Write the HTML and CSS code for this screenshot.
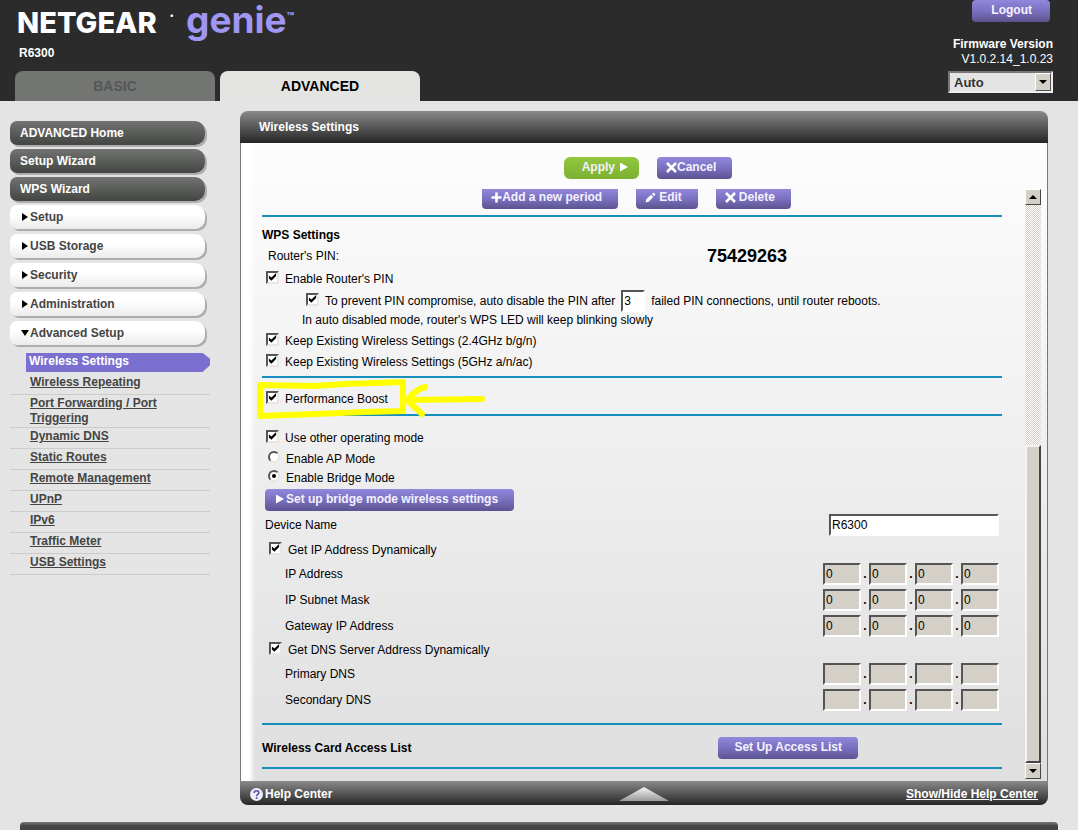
FILE: index.html
```html
<!DOCTYPE html>
<html lang="en">
<head>
<meta charset="utf-8">
<title>NETGEAR genie - R6300</title>
<link rel="stylesheet" href="styles.css">
</head>
<body>
<header class="top">
  <div class="brand">
    <div class="logo"><span class="logo-name">NETGEAR</span><span class="logo-reg">•</span><span class="logo-genie">genie</span><span class="logo-tm">™</span></div>
    <div class="model">R6300</div>
    <nav class="tabs">
      <a class="tab" href="#basic">BASIC</a>
      <a class="tab active" href="#advanced">ADVANCED</a>
    </nav>
  </div>
  <div class="account">
    <button class="btn logout" type="button">Logout</button>
    <b class="fw">Firmware Version</b>
    <span class="fw">V1.0.2.14_1.0.23</span>
    <span class="lang"><select aria-label="Language"><option>Auto</option></select><span class="lang-arrow"></span></span>
  </div>
</header>

<div class="page">
  <nav class="side">
    <button class="item dark" type="button">ADVANCED Home</button>
    <button class="item dark" type="button">Setup Wizard</button>
    <button class="item dark" type="button">WPS Wizard</button>
    <button class="item" type="button"><i class="tri"></i>Setup</button>
    <button class="item" type="button"><i class="tri"></i>USB Storage</button>
    <button class="item" type="button"><i class="tri"></i>Security</button>
    <button class="item" type="button"><i class="tri"></i>Administration</button>
    <button class="item" type="button"><i class="tri down"></i>Advanced Setup</button>
    <a class="current" href="#wireless">Wireless Settings</a>
    <ul class="sub">
      <li><a href="#repeating">Wireless Repeating</a></li>
      <li><a href="#ports">Port Forwarding / Port Triggering</a></li>
      <li><a href="#ddns">Dynamic DNS</a></li>
      <li><a href="#routes">Static Routes</a></li>
      <li><a href="#remote">Remote Management</a></li>
      <li><a href="#upnp">UPnP</a></li>
      <li><a href="#ipv6">IPv6</a></li>
      <li><a href="#traffic">Traffic Meter</a></li>
      <li><a href="#usb">USB Settings</a></li>
    </ul>
  </nav>

  <main class="panel">
    <h1 class="bar title">Wireless Settings</h1>
    <div class="inner">
      <div class="toolbar">
        <button class="btn apply" type="button">Apply <i class="play"></i></button>
        <button class="btn" type="button"><svg class="ico" viewBox="0 0 11 11"><path d="M1 1L10 10M10 1L1 10"/></svg>Cancel</button>
      </div>
      <div class="scroller">
        <form class="content">
          <div class="periods">
            <button class="btn cut" type="button"><svg class="ico" viewBox="0 0 11 11"><path d="M5.500 0.500V10.500M0.500 5.500H10.500"/></svg>Add a new period</button>
            <button class="btn cut wide" type="button"><svg class="ico" viewBox="0 0 11 11"><path class="fill" d="M0.500 10.500L1.500 7L6 2.800L8.200 5L4 9.500ZM7 2L8.500 0.500L10.500 2.500L9 4Z"/></svg>Edit</button>
            <button class="btn cut wide" type="button"><svg class="ico" viewBox="0 0 11 11"><path d="M1 1L10 10M10 1L1 10"/></svg>Delete</button>
          </div>
          <section class="wps">
            <h2>WPS Settings</h2>
            <div class="row r22 in6"><span>Router's PIN:</span><b class="pin">75429263</b></div>
            <div class="row r24 in4"><input type="checkbox" id="c1" checked><label for="c1">Enable Router's PIN</label></div>
            <div class="row r20 in44"><input type="checkbox" id="c2" checked><label for="c2">To prevent PIN compromise, auto disable the PIN after</label><input class="field count" type="text" value="3" aria-label="Failed connections"><span>failed PIN connections, until router reboots.</span></div>
            <div class="row r18 in40">In auto disabled mode, router's WPS LED will keep blinking slowly</div>
            <div class="row r24 in4"><input type="checkbox" id="c3" checked><label for="c3">Keep Existing Wireless Settings (2.4GHz b/g/n)</label></div>
            <div class="row r18 in4"><input type="checkbox" id="c4" checked><label for="c4">Keep Existing Wireless Settings (5GHz a/n/ac)</label></div>
          </section>
          <section class="boost">
            <div class="row r24 in4"><input type="checkbox" id="c5" checked><label for="c5">Performance Boost</label></div>
            <svg class="mark" viewBox="0 0 235 48"><path d="M5 10L60 11L90 9L148 7L148 36L110 37L60 39L5 41Z"/><path class="arrow" d="M170 12C163 14 156 20 152 25L227 24M152 25L167 39"/></svg>
          </section>
          <section class="mode">
            <div class="row r24 in4"><input type="checkbox" id="c6" checked><label for="c6">Use other operating mode</label></div>
            <div class="row r18 in6"><input type="radio" name="mode" id="r1"><label for="r1">Enable AP Mode</label></div>
            <div class="row r20 in6"><input type="radio" name="mode" id="r2" checked><label for="r2">Enable Bridge Mode</label></div>
            <button class="btn bridge" type="button"><i class="play"></i>Set up bridge mode wireless settings</button>
            <div class="row r28 in3 ends"><label for="dev">Device Name</label><input class="field device" type="text" id="dev" value="R6300"></div>
            <div class="row r22 in7"><input type="checkbox" id="c7" checked><label for="c7">Get IP Address Dynamically</label></div>
            <div class="row r26 in23 ends"><span>IP Address</span><div class="ip"><input class="field" disabled value="0" aria-label="IP 1"><b>.</b><input class="field" disabled value="0" aria-label="IP 2"><b>.</b><input class="field" disabled value="0" aria-label="IP 3"><b>.</b><input class="field" disabled value="0" aria-label="IP 4"></div></div>
            <div class="row r26 in23 ends"><span>IP Subnet Mask</span><div class="ip"><input class="field" disabled value="0" aria-label="Mask 1"><b>.</b><input class="field" disabled value="0" aria-label="Mask 2"><b>.</b><input class="field" disabled value="0" aria-label="Mask 3"><b>.</b><input class="field" disabled value="0" aria-label="Mask 4"></div></div>
            <div class="row r26 in23 ends"><span>Gateway IP Address</span><div class="ip"><input class="field" disabled value="0" aria-label="Gateway 1"><b>.</b><input class="field" disabled value="0" aria-label="Gateway 2"><b>.</b><input class="field" disabled value="0" aria-label="Gateway 3"><b>.</b><input class="field" disabled value="0" aria-label="Gateway 4"></div></div>
            <div class="row r22 in7"><input type="checkbox" id="c8" checked><label for="c8">Get DNS Server Address Dynamically</label></div>
            <div class="row r26 in23 ends"><span>Primary DNS</span><div class="ip"><input class="field" disabled aria-label="Primary 1"><b>.</b><input class="field" disabled aria-label="Primary 2"><b>.</b><input class="field" disabled aria-label="Primary 3"><b>.</b><input class="field" disabled aria-label="Primary 4"></div></div>
            <div class="row r26 in23 ends"><span>Secondary DNS</span><div class="ip"><input class="field" disabled aria-label="Secondary 1"><b>.</b><input class="field" disabled aria-label="Secondary 2"><b>.</b><input class="field" disabled aria-label="Secondary 3"><b>.</b><input class="field" disabled aria-label="Secondary 4"></div></div>
          </section>
          <section class="access">
            <h2>Wireless Card Access List</h2>
            <button class="btn list" type="button">Set Up Access List</button>
          </section>
        </form>
        <div class="scrollbar">
          <button class="sb" type="button" aria-label="Scroll up"><i class="up"></i></button>
          <div class="track"></div>
          <div class="thumb"></div>
          <button class="sb" type="button" aria-label="Scroll down"><i class="dn"></i></button>
        </div>
      </div>
    </div>
    <div class="bar help">
      <span class="help-name"><svg class="q" viewBox="0 0 13 13"><circle cx="6.500" cy="6.500" r="6.500" fill="#f0f0fa"/><path d="M4.200 5C4.200 2 9 2.100 8.900 4.800C8.800 6.400 6.600 6.300 6.600 8.200M6.600 9.300V10.900" fill="none" stroke="#5a55a8" stroke-width="1.700"/></svg>Help Center</span>
      <svg class="peak" viewBox="0 0 50 14"><defs><linearGradient id="pk" x1="0" y1="0" x2="0" y2="1"><stop offset="0" stop-color="#f4f4f4"/><stop offset="1" stop-color="#9a9a9a"/></linearGradient></defs><path d="M25 0L50 14H0Z" fill="url(#pk)"/></svg>
      <a href="#help">Show/Hide Help Center</a>
    </div>
  </main>
</div>
<footer class="foot"></footer>
</body>
</html>
```
FILE: styles.css
```css
* { box-sizing: border-box; }
body {
  margin: 0;
  background: #e4e4e4;
  color: #000;
  font: 12px/15px "Liberation Sans", Arial, sans-serif;
}
button, input, select { font: inherit; margin: 0; }
h1, h2 { margin: 0; font-size: 12px; line-height: 20px; }

/* header */
.top {
  display: flex;
  justify-content: space-between;
  background: #2b2b2b;
  color: #fff;
}
.brand { display: flex; flex-direction: column; }
.logo {
  display: flex;
  align-items: baseline;
  height: 46px;
  padding-left: 17px;
  font: 800 29px/40px Inter, sans-serif;
}
.logo-name { min-width: 153px; }
.logo-reg { align-self: flex-start; width: 16px; font-size: 8px; line-height: 30px; }
.logo-genie { color: #9f97f3; font-size: 37px; font-weight: 700; }
.logo-tm { align-self: flex-start; color: #9f97f3; font-size: 12px; line-height: 34px; }
.model { padding-left: 19px; font-weight: bold; }
.tabs { display: flex; gap: 5px; padding: 10px 0 0 15px; }
.tab {
  width: 200px;
  border-radius: 8px 8px 0 0;
  background: #737573;
  color: #555755;
  font-size: 14px;
  font-weight: bold;
  line-height: 30px;
  text-align: center;
  text-decoration: none;
}
.tab.active { background: #e4e5e3; color: #000; }
.account {
  display: flex;
  flex-direction: column;
  align-items: flex-end;
  padding-right: 25px;
}
.account .logout { margin: 0 3px 15px 0; padding: 0 18px 2px 19px; }
.fw { line-height: 15px; }
.lang { position: relative; margin-top: 4px; }
.lang select {
  appearance: none;
  display: block;
  width: 105px;
  height: 22px;
  padding: 0 4px;
  border: 2px solid;
  border-color: #777 #eee #eee #777;
  border-radius: 0;
  background: #e4e4e4;
  color: #333;
  font-size: 13px;
  font-weight: bold;
}
.lang-arrow {
  position: absolute;
  top: 2px;
  right: 2px;
  width: 16px;
  height: 18px;
  border: 1px solid;
  border-color: #fff #555 #555 #fff;
  background: #d4d0c8;
  pointer-events: none;
}
.lang-arrow::after {
  content: "";
  display: block;
  width: 8px;
  height: 4px;
  margin: 6px 3px;
  background: #000;
  clip-path: polygon(0 0, 100% 0, 50% 100%);
}

/* buttons */
.btn {
  display: inline-flex;
  align-items: center;
  justify-content: center;
  height: 22px;
  padding: 0 16px 2px 9px;
  border: 0;
  border-radius: 4px;
  background: linear-gradient(#9288dc, #7a70c0 50%, #5c548f);
  color: #f4f2ff;
  font-weight: bold;
  white-space: nowrap;
}
.apply { gap: 5px; padding: 0 11px 2px 18px; background: linear-gradient(#92c83e, #7cb030); border-radius: 6px; }
.cut { height: 20px; padding-bottom: 3px; border-radius: 0 0 4px 4px; }
.wide { gap: 3px; }
.ico { width: 11px; height: 11px; }
.ico path { fill: none; stroke: #fff; stroke-width: 2.600; }
.ico .fill { fill: #fff; stroke: none; }
.play { width: 8px; height: 9px; background: #fff; clip-path: polygon(0 0, 100% 50%, 0 100%); }

/* sidebar */
.page { display: flex; padding: 10px 30px 0 10px; }
.side { flex: none; width: 200px; margin-right: 30px; padding-top: 10px; }
.item {
  display: flex;
  align-items: center;
  width: 195px;
  height: 24px;
  margin-bottom: 5px;
  padding: 0 0 0 10px;
  border: 0;
  border-radius: 7px 10px 10px 7px;
  background: linear-gradient(#fff 40%, #ebebeb);
  box-shadow: 2px 2px 0 #adadad;
  color: #444;
  font-weight: bold;
}
.item.dark { margin-bottom: 4px; background: linear-gradient(#727472, #434543); color: #fff; }
.tri { width: 6px; height: 8px; margin: 0 2px; background: #000; clip-path: polygon(0 0, 100% 50%, 0 100%); }
.tri.down { width: 8px; height: 6px; margin: 0 1px; clip-path: polygon(0 0, 100% 0, 50% 100%); }
.current {
  display: block;
  height: 19px;
  margin: 8px 0 2px 16px;
  padding-left: 3px;
  background: #7b70d0;
  clip-path: polygon(0 0, 96% 0, 100% 30%, 100% 65%, 96% 100%, 0 100%);
  color: #fff;
  font-weight: bold;
  line-height: 16px;
  text-decoration: none;
}
.sub { margin: 0; padding: 0; list-style: none; }
.sub li { min-height: 21px; padding: 1px 0 1px 20px; border-bottom: 1px solid #ccc; }
.sub a { color: #444; font-weight: bold; }

/* panel */
.panel { flex: 1; min-width: 0; }
.bar { background: linear-gradient(#8a8a8a, #262626); color: #fff; }
.title { padding-left: 19px; border-radius: 8px 8px 0 0; line-height: 32px; }
.inner {
  padding-left: 8px;
  border: solid #777;
  border-width: 0 1px;
  background: linear-gradient(90deg, #fff 8px, transparent 14px), linear-gradient(#fdfdfd, #f0f0f0 45%, #e0e0e1 95%);
}
.toolbar { display: flex; justify-content: center; gap: 18px; padding: 14px 0 10px; }
.scroller { display: flex; padding-bottom: 2px; }
.content { flex: 1; min-width: 0; padding: 0 23px 10px 13px; }
.periods { display: flex; justify-content: center; gap: 18px; padding: 0 0 6px 9px; }
.content > section { position: relative; border-top: 2px solid #1690bb; }
.row { display: flex; align-items: center; }
.r18 { height: 18px; }
.r20 { height: 20px; }
.r22 { height: 22px; }
.r24 { height: 24px; }
.r26 { height: 26px; }
.r28 { height: 28px; }
.in3 { padding-left: 3px; }
.in4 { padding-left: 4px; }
.in6 { padding-left: 6px; }
.in7 { padding-left: 7px; }
.in23 { padding-left: 23px; }
.in40 { padding-left: 40px; }
.in44 { padding-left: 44px; }
.ends { justify-content: space-between; padding-right: 3px; }
.wps { padding: 8px 0 5px; }
.row > .pin { margin-left: auto; width: 295px; font-size: 18px; }
.boost { padding: 9px 0 3px; }
.mode { padding: 10px 0; }
.bridge { display: flex; gap: 2px; margin: 1px 0 0 3px; padding-left: 11px; }
.access {
  display: flex;
  align-items: center;
  justify-content: space-between;
  height: 46px;
  padding-top: 4px;
  border-bottom: 2px solid #1690bb;
}
.list { margin-right: 144px; padding: 0 16px 2px; }

input[type="checkbox"], input[type="radio"] {
  appearance: none;
  flex: none;
  width: 13px;
  height: 13px;
  margin: 0 6px 4px 0;
  border: 2px solid;
  border-color: #555 #e8e6e0 #e8e6e0 #555;
  background: #fff;
}
input[type="radio"] { width: 12px; height: 12px; border-radius: 50%; }
input[type="checkbox"]:checked::before {
  content: "";
  display: block;
  width: 9px;
  height: 9px;
  background: #000;
  clip-path: polygon(10% 32%, 38% 55%, 90% 5%, 90% 40%, 38% 92%, 10% 66%);
}
input[type="radio"]:checked::before {
  content: "";
  display: block;
  width: 4px;
  height: 4px;
  margin: 2px;
  border-radius: 50%;
  background: #000;
}
.field {
  width: 38px;
  height: 22px;
  padding: 0 1px;
  border: 2px solid;
  border-color: #555 #fff #fff #555;
  border-radius: 0;
  background: #fff;
  color: #000;
}
.field:disabled { background: #d4d0c8; }
.count { width: 24px; margin: 0 6px; }
.device { width: 170px; }
.ip { display: flex; }
.ip b { width: 8px; padding-top: 4px; text-align: center; }
.mark {
  position: absolute;
  top: -3px;
  left: -7px;
  width: 235px;
  height: 48px;
  fill: none;
  stroke: #ffff00;
  stroke-width: 6;
  stroke-linecap: round;
  stroke-linejoin: round;
  z-index: 1;
  pointer-events: none;
}

/* scrollbar */
.scrollbar {
  display: flex;
  flex-direction: column;
  width: 16px;
  margin: 0 6px 0 0;
}
.sb {
  display: grid;
  place-items: center;
  height: 16px;
  padding: 0;
  border: 1px solid;
  border-color: #fff #444 #444 #fff;
  background: #d4d0c8;
}
.up, .dn { width: 8px; height: 4px; background: #000; clip-path: polygon(50% 0, 100% 100%, 0 100%); }
.dn { clip-path: polygon(0 0, 100% 0, 50% 100%); }
.track { flex: 242; background: repeating-conic-gradient(#d4d0c8 0 25%, #fff 0 50%) 0 0 / 2px 2px; }
.thumb {
  flex: 316;
  border: 2px solid;
  border-color: #f4f4f0 #444 #444 #f4f4f0;
  background: #d4d0c8;
}

/* help bar and footer */
.help {
  display: grid;
  grid-template-columns: 1fr auto 1fr;
  align-items: center;
  height: 24px;
  padding: 2px 10px 0;
  border-radius: 0 0 8px 8px;
  font-weight: bold;
}
.help-name { display: flex; align-items: center; gap: 2px; }
.help a { justify-self: end; color: #fff; }
.q { width: 13px; height: 13px; }
.peak { width: 50px; height: 14px; }
.foot {
  height: 8px;
  margin: 17px 20px 0;
  border-radius: 4px 4px 0 0;
  background: linear-gradient(#777, #444 50%);
}
```
